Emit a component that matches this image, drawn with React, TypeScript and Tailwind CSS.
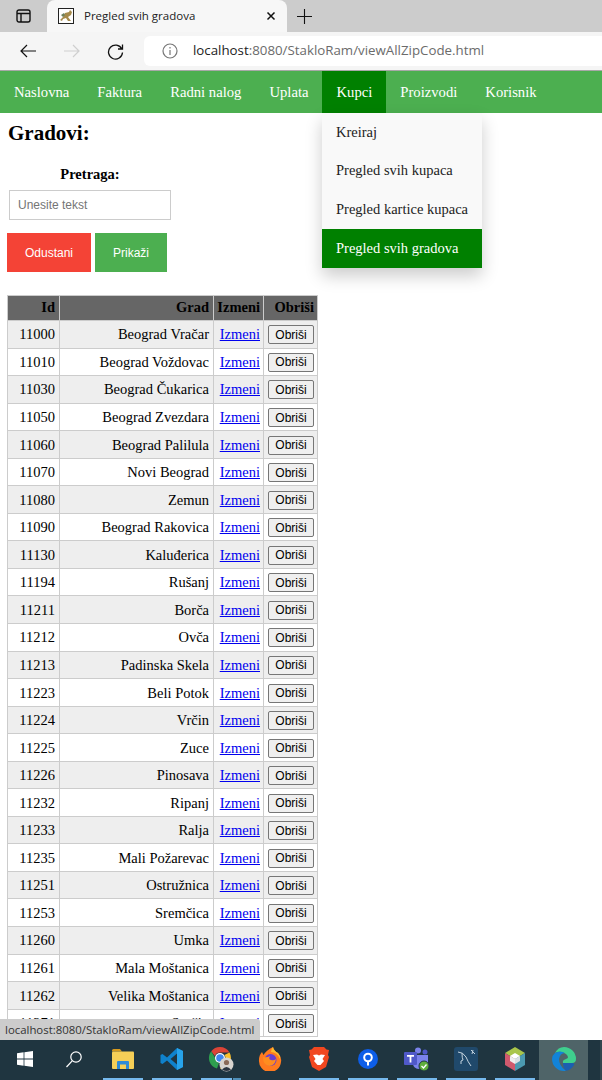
import React from 'react'

const navItems = ['Naslovna', 'Faktura', 'Radni nalog', 'Uplata', 'Kupci', 'Proizvodi', 'Korisnik']
const menuItems = ['Kreiraj', 'Pregled svih kupaca', 'Pregled kartice kupaca', 'Pregled svih gradova']

const cities: [string, string][] = [
  ['11000', 'Beograd Vračar'],
  ['11010', 'Beograd Voždovac'],
  ['11030', 'Beograd Čukarica'],
  ['11050', 'Beograd Zvezdara'],
  ['11060', 'Beograd Palilula'],
  ['11070', 'Novi Beograd'],
  ['11080', 'Zemun'],
  ['11090', 'Beograd Rakovica'],
  ['11130', 'Kaluđerica'],
  ['11194', 'Rušanj'],
  ['11211', 'Borča'],
  ['11212', 'Ovča'],
  ['11213', 'Padinska Skela'],
  ['11223', 'Beli Potok'],
  ['11224', 'Vrčin'],
  ['11225', 'Zuce'],
  ['11226', 'Pinosava'],
  ['11232', 'Ripanj'],
  ['11233', 'Ralja'],
  ['11235', 'Mali Požarevac'],
  ['11251', 'Ostružnica'],
  ['11253', 'Sremčica'],
  ['11260', 'Umka'],
  ['11261', 'Mala Moštanica'],
  ['11262', 'Velika Moštanica'],
  ['11271', 'Surčin'],
]

const Tile = ({ line, active, children }: { line?: boolean; active?: boolean; children: React.ReactNode }) => (
  <div className={`w-[49px] h-full flex flex-col items-center ${active ? 'bg-[#4f6468]' : ''}`}>
    <div className="flex-1 flex items-center justify-center">{children}</div>
    <div className={`w-[40px] h-[2px] ${line ? 'bg-[#76b9ed]' : ''}`}></div>
  </div>
)

const Taskbar = () => (
  <div className="h-[40px] shrink-0 bg-[#1f3540] flex">
    <Tile>
      <svg width="16" height="16" viewBox="0 0 16 16"><path d="M0 2.3 6.6 1.3V7.5H0ZM7.4 1.2 16 0V7.5H7.4ZM0 8.4H6.6V14.7L0 13.7ZM7.4 8.4H16V16L7.4 14.8Z" fill="#fff" /></svg>
    </Tile>
    <Tile>
      <svg width="18" height="18" viewBox="0 0 18 18" fill="none" stroke="#fff" strokeWidth="1.2"><circle cx="11" cy="7" r="5.2" /><path d="M7.2 10.8 1.5 17" /></svg>
    </Tile>
    <Tile line>
      <svg width="22" height="20" viewBox="0 0 22 20"><path d="M0 1.5Q0 0 1.5 0H8L10 2.5H0Z" fill="#d69a1e" /><rect y="2.5" width="22" height="17.5" rx="1" fill="#f6cf57" /><path d="M5 19.9V13Q5 12 6 12H16Q17 12 17 13V19.9H14V15.5H8V19.9Z" fill="#2f8bd6" /></svg>
    </Tile>
    <Tile line>
      <svg width="24" height="24" viewBox="0 0 24 24"><path d="M17 1 23 4V20L17 23 7 13.5 2.5 17 .5 16V8L2.5 7 7 10.5Z" fill="#0f82cc" /><path d="M17 6.5 10.5 12 17 17.5Z" fill="#1f3540" /><path d="M17 1 23 4V20L17 23Z" fill="#27a3ea" /></svg>
    </Tile>
    <div className="w-[49px] h-full flex flex-col items-center">
      <div className="flex-1 flex items-center justify-center">
        <svg width="26" height="26" viewBox="0 0 26 26">
          <path d="M12 1A11 11 0 0 1 21.5 6.5H12A5.5 5.5 0 0 0 6.9 9.9L3.2 5.3A11 11 0 0 1 12 1Z" fill="#db4437" />
          <path d="M3.2 5.3 7.5 12.5A5 5 0 0 0 11 17L9 22.6A11 11 0 0 1 3.2 5.3Z" fill="#2e9e4f" />
          <path d="M21.5 6.5A11 11 0 0 1 12 23L16.5 15A5 5 0 0 0 16.4 9Z" fill="#fbc02d" />
          <circle cx="12" cy="12" r="5" fill="#fff" /><circle cx="12" cy="12" r="3.8" fill="#3f85f0" />
          <circle cx="18.5" cy="18.5" r="7" fill="#d8d4cf" /><circle cx="18.5" cy="16.5" r="2.6" fill="#8a6a58" /><path d="M14 23.5Q18.5 18.5 23 23.5 18.5 26.5 14 23.5Z" fill="#2c3540" />
        </svg>
      </div>
      <div className="flex gap-[1px] w-[40px]">
        <div className="w-[31px] h-[2px] bg-[#76b9ed]"></div>
        <div className="flex-1 h-[2px] bg-[#4f8fb8]"></div>
      </div>
    </div>
    <Tile>
      <svg width="24" height="24" viewBox="0 0 24 24">
        <path d="M15 0Q16 4 20 6 24 10 23 15A11 11 0 0 1 1 13Q1 8 4 5L5.5 8Q8 3.5 15 0Z" fill="#ff7a1f" />
        <path d="M15 0Q16 4 20 6 23 10 22 12 19 5 13 5 13 2 15 0Z" fill="#fdbb2d" />
        <circle cx="12.5" cy="13" r="6" fill="#6a3fd0" />
        <path d="M5 10Q9 11 12 9 10 12 13 13 16 14 18 12 17 19 11 19 5 18 5 10Z" fill="#ff8d1f" />
      </svg>
    </Tile>
    <Tile line>
      <svg width="20" height="24" viewBox="0 0 20 24">
        <path d="M5 0H15L17.5 2.5 20 3 19 8 20 10 17 20 10 24 3 20 0 10 1 8 0 3 2.5 2.5Z" fill="#f1471f" />
        <path d="M4 8 8 7.5 10 8.5 12 7.5 16 8 13.5 12 15 14 11.5 18H8.5L5 14 6.5 12Z" fill="#fff" />
      </svg>
    </Tile>
    <Tile line>
      <svg width="22" height="22" viewBox="0 0 22 22">
        <circle cx="11" cy="11" r="10" fill="#0d5ee8" />
        <circle cx="11" cy="9.5" r="3.8" fill="none" stroke="#fff" strokeWidth="2" />
        <rect x="10" y="13" width="2" height="4.5" fill="#fff" />
      </svg>
    </Tile>
    <Tile line>
      <svg width="26" height="24" viewBox="0 0 26 24">
        <circle cx="14" cy="3.5" r="3" fill="#7b83eb" /><circle cx="21" cy="5" r="2.5" fill="#5059c9" />
        <path d="M9 8H24V16Q24 22 16 22 9 22 9 16Z" fill="#7b83eb" />
        <rect x="0" y="5" width="13" height="13" rx="1" fill="#5059c9" />
        <path d="M3 8H10V9.7H7.4V15.5H5.6V9.7H3Z" fill="#fff" />
        <circle cx="20" cy="19" r="5" fill="#5fae3b" stroke="#1f3540" /><path d="M17.5 19 19.5 21 22.5 17.5" fill="none" stroke="#fff" strokeWidth="1.3" />
      </svg>
    </Tile>
    <Tile line>
      <svg width="24" height="24" viewBox="0 0 24 24">
        <rect width="24" height="24" rx="3" fill="#20496b" />
        <path d="M4 5Q9 5 12 10 14 15 17 19M8 6Q8 11 9 13 6 13 7 17M17 3 21 7M19 3 18 7" fill="none" stroke="#c3d3df" strokeWidth="1" />
      </svg>
    </Tile>
    <Tile line>
      <svg width="22" height="24" viewBox="0 0 22 24">
        <path d="M11 0 21 6 11 12 1 6Z" fill="#a9c54a" />
        <path d="M1 6 11 12V24L1 18Z" fill="#d0596d" />
        <path d="M21 6 11 12V24L21 18Z" fill="#4b9ab1" />
        <path d="M11 6 16 9 11 12 6 9Z" fill="#fff" /><path d="M6 9 11 12V17L6 14Z" fill="#eee" /><path d="M16 9 11 12V17L16 14Z" fill="#d9dfe3" />
      </svg>
    </Tile>
    <Tile active>
      <svg width="24" height="24" viewBox="0 0 24 24">
        <path d="M12 0A12 12 0 0 1 24 12Q24 16 20 16H11Q10 13 14 12 18 11 14 7 8 3 3 6 6 0 12 0Z" fill="#3fcf8e" />
        <path d="M3 6Q8 3 13 6 8 6 7 12 7 19 14 23.8 12.8 24 12 24A12 12 0 0 1 0 12Q0 8.5 3 6Z" fill="#1283d8" />
        <path d="M11 16H20Q23 16 22 18 19 23 14 23.8 11 21 11 16Z" fill="#1b5fb0" />
      </svg>
    </Tile>
    <div className="flex-1 flex justify-end items-center"><div className="w-[2px] h-full bg-[#33474f]"></div></div>
  </div>
)

const BrowserChrome = () => (
  <div className="shrink-0" style={{ fontFamily: '"Open Sans", sans-serif' }}>
    <div className="h-[32px] bg-[#cccccc] flex">
      <div className="w-[47px] flex items-center justify-center">
        <svg width="15" height="14" viewBox="0 0 15 14" fill="none" stroke="#111" strokeWidth="1.4"><rect x="1" y="1" width="13" height="12" rx="2" /><path d="M1 4.5H14M5 4.5V13" /></svg>
      </div>
      <div className="w-[240px] bg-[#f7f7f7] rounded-t-[8px] flex items-center">
        <svg className="ml-[11px]" width="16" height="16" viewBox="0 0 16 16">
          <rect x=".5" y=".5" width="15" height="15" fill="#fff" stroke="#222" />
          <path d="M2 12 5 9 7 5 11 4 12 2 14 4 13 7 10 9 13 13H10L8 10 5 11 4 13Z" fill="#a68a4a" />
          <path d="M3 7 6 5 7 7 5 9Z" fill="#6b7f5a" />
        </svg>
        <span className="ml-[10px] text-[11.5px] text-[#222]">Pregled svih gradova</span>
        <svg className="ml-auto mr-[11px]" width="10" height="10" viewBox="0 0 10 10" stroke="#111" strokeWidth="1.5"><path d="M1.5 1.5 8.5 8.5M8.5 1.5 1.5 8.5" /></svg>
      </div>
      <div className="flex items-center ml-[10px]">
        <svg width="15" height="15" viewBox="0 0 15 15" stroke="#111" strokeWidth="1.1"><path d="M7.5 0V15M0 7.5H15" /></svg>
      </div>
    </div>
    <div className="h-[38px] bg-[#f5f5f5] border-b border-[#a8a8a8] flex items-center box-content">
      <div className="w-[144px] flex items-center pl-[20px] gap-[27.5px]">
        <svg width="16" height="14" viewBox="0 0 16 14" fill="none" stroke="#111" strokeWidth="1.2"><path d="M16 7H1M7 1 1 7 7 13" /></svg>
        <svg width="16" height="14" viewBox="0 0 16 14" fill="none" stroke="#cfcfcf" strokeWidth="1.2"><path d="M0 7H15M9 1 15 7 9 13" /></svg>
        <svg width="17" height="17" viewBox="0 0 17 17" fill="none" stroke="#111" strokeWidth="1.3"><path d="M14.8 6A7 7 0 1 0 15.5 9.5M15.5 1.5V6H11" /></svg>
      </div>
      <div className="flex-1 h-[30px] bg-white rounded-l-[6px] flex items-center pl-[18px]">
        <svg width="16" height="16" viewBox="0 0 16 16" fill="none" stroke="#777" strokeWidth="1.2"><circle cx="8" cy="8" r="7" /><path d="M8 7V12M8 4V5.5" /></svg>
        <span className="ml-[15px] text-[13.3px] text-[#6b6b6b] whitespace-nowrap"><span className="text-[#222]">localhost</span>:8080/StakloRam/viewAllZipCode.html</span>
      </div>
    </div>
  </div>
)

const App = () => {
  return (
    <div className="h-[1080px] w-[602px] flex flex-col overflow-hidden bg-white text-black" style={{ fontFamily: '"Liberation Serif", serif' }}>
      <BrowserChrome />

      <div className="flex-1 min-h-0 relative overflow-hidden">
        <nav className="h-[42px] bg-[#4caf50] flex">
          {navItems.map((item, idx) => (
            <a key={idx} className={`px-[14px] flex items-center text-[14.67px] text-white ${item === 'Kupci' ? 'bg-[#008000]' : ''}`}>
              {item}
            </a>
          ))}
        </nav>

        <div className="absolute left-[322px] top-[42px] w-[160px] bg-[#f9f9f9] shadow-[0_8px_16px_0_rgba(0,0,0,0.2)] z-10">
          {menuItems.map((item, idx) => (
            <div key={idx} className={`h-[38.75px] px-[14px] flex items-center whitespace-nowrap text-[14.5px] ${idx === 3 ? 'bg-[#008000] text-white' : 'text-[#222]'}`}>
              {item}
            </div>
          ))}
        </div>

        <div className="pl-[7px]">
          <h2 className="pt-[6px] pl-[1px] text-[21px] font-bold leading-[28px]">Gradovi:</h2>
          <div className="w-[166px] mt-[19px] text-center text-[14.5px] font-bold leading-[17px]">Pretraga:</div>
          <input
            placeholder="Unesite tekst"
            className="block ml-[2px] mt-[7px] w-[162px] h-[30px] px-[8px] border border-[#cccccc] text-[12px] placeholder:text-[#757575] outline-none"
            style={{ fontFamily: '"Liberation Sans", sans-serif' }}
          />
          <div className="flex gap-[4px] mt-[13px] text-[12px] text-white" style={{ fontFamily: '"Liberation Sans", sans-serif' }}>
            <button className="w-[84px] h-[39px] bg-[#f44336]">Odustani</button>
            <button className="w-[72px] h-[39px] bg-[#4caf50]">Prikaži</button>
          </div>

          <table className="mt-[23px] w-[310px] border-collapse table-fixed text-[14.5px]">
            <colgroup>
              <col className="w-[52px]" />
              <col className="w-[154px]" />
              <col className="w-[50px]" />
              <col className="w-[54px]" />
            </colgroup>
            <thead>
              <tr className="h-[25px] bg-[#666666] font-bold">
                <th className="border border-[#cccccc] pr-[4px] text-right">Id</th>
                <th className="border border-[#cccccc] pr-[4px] text-right">Grad</th>
                <th className="border border-[#cccccc] pr-[3px] text-right">Izmeni</th>
                <th className="border border-[#cccccc] pr-[3px] text-right">Obriši</th>
              </tr>
            </thead>
            <tbody>
              {cities.map(([id, name], index) => (
                <tr key={id} className={`h-[27.55px] ${index % 2 === 0 ? 'bg-[#eeeeee]' : 'bg-white'}`}>
                  <td className="border border-[#cccccc] pt-[2px] pr-[4px] text-right">{id}</td>
                  <td className="border border-[#cccccc] pt-[2px] pr-[4px] text-right whitespace-nowrap">{name}</td>
                  <td className="border border-[#cccccc] pt-[2px] pr-[3px] text-right"><a className="text-[#0000ee] underline">Izmeni</a></td>
                  <td className="border border-[#cccccc] pt-[1px] pr-[3px] text-right">
                    <button className="w-[46px] h-[19px] bg-[#efefef] border border-[#767676] rounded-[2px] text-[12px] leading-none" style={{ fontFamily: '"Liberation Sans", sans-serif' }}>Obriši</button>
                  </td>
                </tr>
              ))}
            </tbody>
          </table>
        </div>

        <div className="absolute left-0 bottom-0 w-[260px] h-[21px] bg-[#cccccc] rounded-tr-[3px] pl-[5px] flex items-center text-[11.4px] text-[#333] whitespace-nowrap z-10" style={{ fontFamily: '"Open Sans", sans-serif' }}>
          localhost:8080/StakloRam/viewAllZipCode.html
        </div>
      </div>

      <Taskbar />
    </div>
  )
}

export default App
